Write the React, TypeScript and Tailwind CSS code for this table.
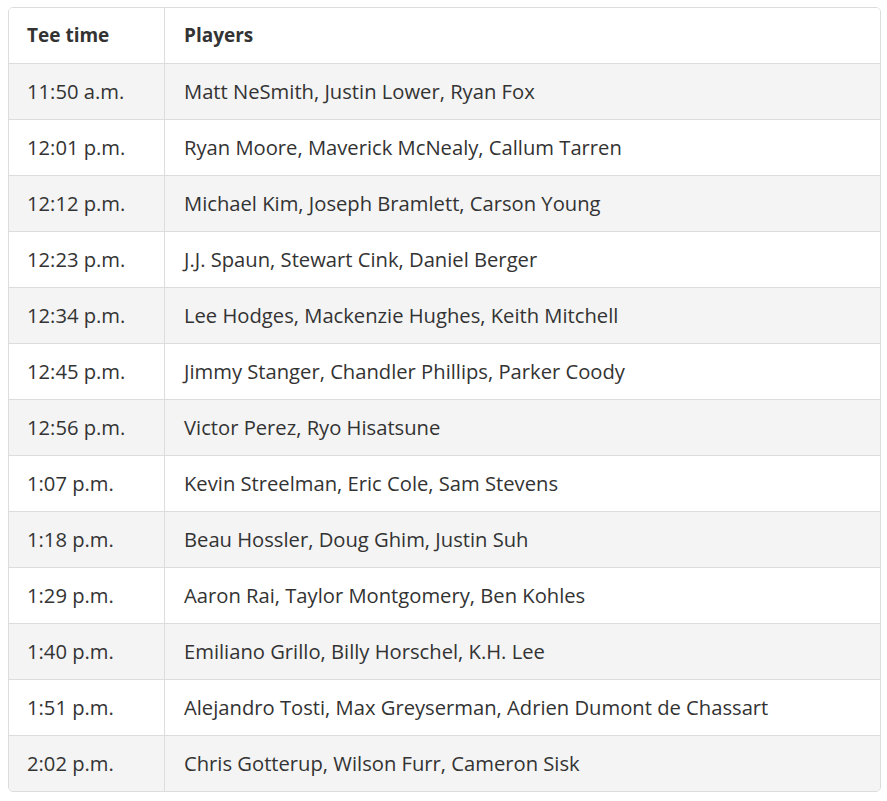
import React from "react";

const rows: [string, string][] = [
  ["11:50 a.m.", "Matt NeSmith, Justin Lower, Ryan Fox"],
  ["12:01 p.m.", "Ryan Moore, Maverick McNealy, Callum Tarren"],
  ["12:12 p.m.", "Michael Kim, Joseph Bramlett, Carson Young"],
  ["12:23 p.m.", "J.J. Spaun, Stewart Cink, Daniel Berger"],
  ["12:34 p.m.", "Lee Hodges, Mackenzie Hughes, Keith Mitchell"],
  ["12:45 p.m.", "Jimmy Stanger, Chandler Phillips, Parker Coody"],
  ["12:56 p.m.", "Victor Perez, Ryo Hisatsune"],
  ["1:07 p.m.", "Kevin Streelman, Eric Cole, Sam Stevens"],
  ["1:18 p.m.", "Beau Hossler, Doug Ghim, Justin Suh"],
  ["1:29 p.m.", "Aaron Rai, Taylor Montgomery, Ben Kohles"],
  ["1:40 p.m.", "Emiliano Grillo, Billy Horschel, K.H. Lee"],
  ["1:51 p.m.", "Alejandro Tosti, Max Greyserman, Adrien Dumont de Chassart"],
  ["2:02 p.m.", "Chris Gotterup, Wilson Furr, Cameron Sisk"],
];

export default function App() {
  return (
    <div className="bg-white min-h-[801px] pt-[7px] pl-[8px] pr-[6px]" style={{ fontFamily: '"Open Sans", sans-serif' }}>
      <div className="w-[873px] border border-[#dcdcdc] rounded-[5px] overflow-hidden text-[#333333] text-[20.2px]">
        <div className="flex h-[55px] bg-white text-[19px] font-bold">
          <div className="w-[156px] shrink-0 border-r border-[#dcdcdc] flex items-center pl-[18px]">Tee time</div>
          <div className="flex-1 flex items-center pl-[19px]">Players</div>
        </div>
        {rows.map(([t, p], i) => (
          <div key={t} className={`flex h-[56px] border-t border-[#dcdcdc] ${i % 2 === 0 ? "bg-[#f4f4f4]" : "bg-white"}`}>
            <div className="w-[156px] shrink-0 border-r border-[#dcdcdc] flex items-center pl-[18px]">{t}</div>
            <div className="flex-1 flex items-center pl-[19px]">{p}</div>
          </div>
        ))}
      </div>
    </div>
  );
}
